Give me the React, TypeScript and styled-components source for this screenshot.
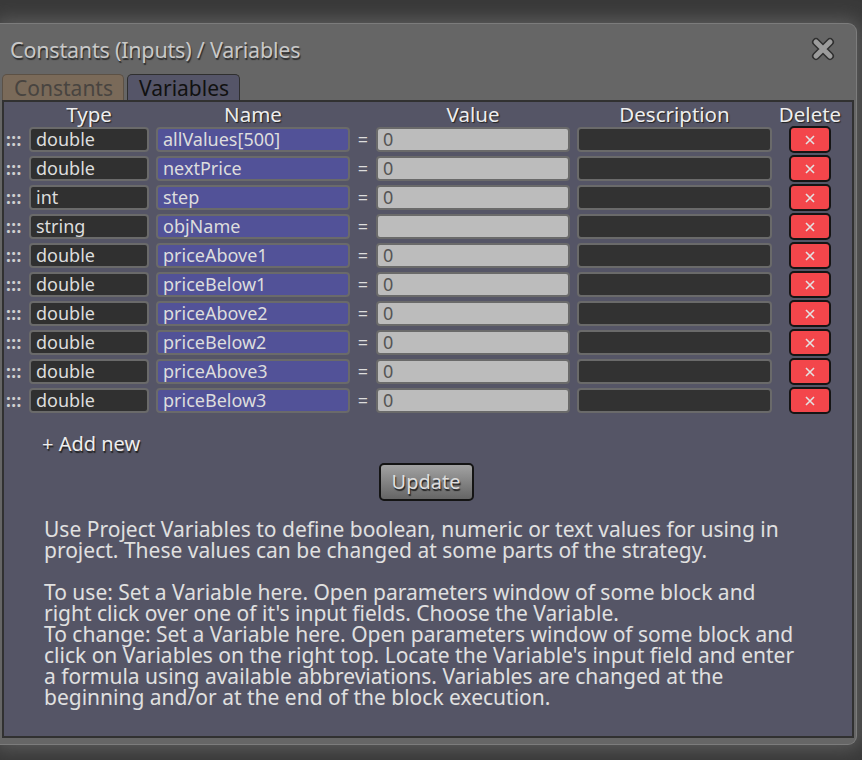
import React from 'react';
import styled, { createGlobalStyle } from 'styled-components';

const GlobalStyle = createGlobalStyle`
  html, body {
    margin: 0;
    padding: 0;
    background: #393939;
    font-family: "Noto Sans", "Open Sans", sans-serif;
  }
`;

const Page = styled.div`
  width: 862px;
  height: 760px;
  overflow: hidden;
  padding-top: 23px;
  box-sizing: border-box;
`;

const Window = styled.div`
  width: 857px;
  height: 722px;
  box-sizing: border-box;
  background: #666666;
  border: 1px solid #7c7c7c;
  border-left: none;
  border-radius: 0 9px 9px 0;
  box-shadow: 0 0 18px 4px #5c5c5c;
  display: flex;
  flex-direction: column;
  padding: 0 2px 6px 2px;
`;

const TitleBar = styled.div`
  height: 50px;
  display: flex;
  align-items: center;
  justify-content: space-between;
  padding: 0 17px 0 8px;
`;

const Title = styled.div`
  font-size: 21.5px;
  color: #c8c8c8;
  text-shadow: 1px 2px 1px #2e2e2e;
  letter-spacing: -0.2px;
`;

const CloseButton = styled.div`
  width: 28px;
  height: 28px;
  display: flex;
  align-items: center;
  justify-content: center;
`;

const Tabs = styled.div`
  display: flex;
  gap: 3px;
  height: 26px;
`;

const Tab = styled.div<{ $active?: boolean }>`
  height: 26px;
  box-sizing: border-box;
  padding: 0 10px 0 11px;
  border: 1px solid ${p => (p.$active ? '#2f2f2f' : '#5c5145')};
  border-bottom: none;
  border-radius: 5px 5px 0 0;
  background: ${p => (p.$active ? '#555568' : '#7a6a59')};
  color: ${p => (p.$active ? '#111111' : '#484440')};
  font-size: 21px;
  line-height: 26px;
`;

const Panel = styled.div`
  flex: 1;
  background: #555566;
  border: 2px solid #313131;
  display: flex;
  flex-direction: column;
`;

const Grid = styled.div`
  display: grid;
  grid-template-columns: 25px 127px 194px 26px 201px 212px 42px;
  row-gap: 2px;
  align-items: center;
  padding-top: 2px;
`;

const HeaderCell = styled.div<{ $w?: number }>`
  width: ${p => p.$w ?? 120}px;
  display: flex;
  justify-content: center;
  white-space: nowrap;
  font-size: 20.5px;
  line-height: 20px;
  color: #eeeeee;
  text-shadow: 1px 1px 1px #222;
`;

const Handle = styled.div`
  color: #d0d0d0;
  font-size: 17px;
  font-weight: bold;
  letter-spacing: 0.5px;
  padding-left: 2px;
  line-height: 25px;
`;

const Field = styled.div<{ $w: number; $bg: string; $fg?: string }>`
  width: ${p => p.$w}px;
  height: 25px;
  box-sizing: border-box;
  background: ${p => p.$bg};
  border: 2px solid #6a6a6a;
  border-radius: 4px;
  color: ${p => p.$fg ?? '#dddddd'};
  font-size: 18px;
  line-height: 21px;
  padding-left: 5px;
  white-space: nowrap;
  overflow: hidden;
`;

const Equals = styled.div`
  text-align: center;
  color: #dddddd;
  font-size: 18px;
  line-height: 25px;
`;

const DeleteButton = styled.div`
  width: 42px;
  height: 27px;
  box-sizing: border-box;
  background: #f3464b;
  border: 2px solid #151515;
  border-radius: 5px;
  display: flex;
  align-items: center;
  justify-content: center;
`;

const AddNew = styled.div`
  margin: 16px 0 0 38px;
  font-size: 20px;
  line-height: 28px;
  color: #eeeeee;
  text-shadow: 1px 2px 1px #222;
`;

const UpdateRow = styled.div`
  display: flex;
  justify-content: center;
  margin-top: 5px;
  padding-right: 4px;
`;

const UpdateButton = styled.div`
  width: 95px;
  height: 38px;
  box-sizing: border-box;
  border: 2px solid #141414;
  border-radius: 5px;
  background: linear-gradient(#a2a2a2, #656565);
  color: #dedede;
  font-size: 20px;
  line-height: 34px;
  text-align: center;
  text-shadow: 1px 2px 1px #222;
`;

const Help = styled.div`
  margin: 18px 0 0 40px;
  font-size: 21px;
  line-height: 21px;
  color: #e0e0e0;
  white-space: pre-line;
`;

const Gap = styled.div`
  height: 21px;
`;

const CloseIcon = () => (
  <svg width="28" height="28" viewBox="0 0 28 28">
    <g strokeLinecap="round">
      <path d="M7 7 L21 21 M21 7 L7 21" stroke="#2f2f2f" strokeWidth="8" />
      <path d="M7 7 L21 21 M21 7 L7 21" stroke="#9c9c9c" strokeWidth="5" />
    </g>
  </svg>
);

const XIcon = () => (
  <svg width="12" height="12" viewBox="0 0 12 12">
    <path d="M2 2 L10 10 M10 2 L2 10" stroke="#e2e2e2" strokeWidth="1.6" />
  </svg>
);

const variables = [
  { type: 'double', name: 'allValues[500]', value: '0' },
  { type: 'double', name: 'nextPrice', value: '0' },
  { type: 'int', name: 'step', value: '0' },
  { type: 'string', name: 'objName', value: '' },
  { type: 'double', name: 'priceAbove1', value: '0' },
  { type: 'double', name: 'priceBelow1', value: '0' },
  { type: 'double', name: 'priceAbove2', value: '0' },
  { type: 'double', name: 'priceBelow2', value: '0' },
  { type: 'double', name: 'priceAbove3', value: '0' },
  { type: 'double', name: 'priceBelow3', value: '0' },
];

const App = () => {
  return (
    <Page>
      <GlobalStyle />
      <Window>
        <TitleBar>
          <Title>Constants (Inputs) / Variables</Title>
          <CloseButton><CloseIcon /></CloseButton>
        </TitleBar>
        <Tabs>
          <Tab>Constants</Tab>
          <Tab $active>Variables</Tab>
        </Tabs>
        <Panel>
          <Grid>
            <div />
            <HeaderCell $w={120}>Type</HeaderCell>
            <HeaderCell $w={194}>Name</HeaderCell>
            <div />
            <HeaderCell $w={194}>Value</HeaderCell>
            <HeaderCell $w={195}>Description</HeaderCell>
            <HeaderCell $w={42}>Delete</HeaderCell>
            {variables.map((v, i) => (
              <React.Fragment key={i}>
                <Handle>:::</Handle>
                <Field $w={120} $bg="#303030">{v.type}</Field>
                <Field $w={194} $bg="#525298">{v.name}</Field>
                <Equals>=</Equals>
                <Field $w={194} $bg="#bcbcbc" $fg="#555555">{v.value}</Field>
                <Field $w={195} $bg="#323232" />
                <DeleteButton><XIcon /></DeleteButton>
              </React.Fragment>
            ))}
          </Grid>
          <AddNew>+ Add new</AddNew>
          <UpdateRow>
            <UpdateButton>Update</UpdateButton>
          </UpdateRow>
          <Help>
            {'Use Project Variables to define boolean, numeric or text values for using in\nproject. These values can be changed at some parts of the strategy.'}
            <Gap />
            {"To use: Set a Variable here. Open parameters window of some block and\nright click over one of it's input fields. Choose the Variable.\nTo change: Set a Variable here. Open parameters window of some block and\nclick on Variables on the right top. Locate the Variable's input field and enter\na formula using available abbreviations. Variables are changed at the\nbeginning and/or at the end of the block execution."}
          </Help>
        </Panel>
      </Window>
    </Page>
  );
};

export default App;
